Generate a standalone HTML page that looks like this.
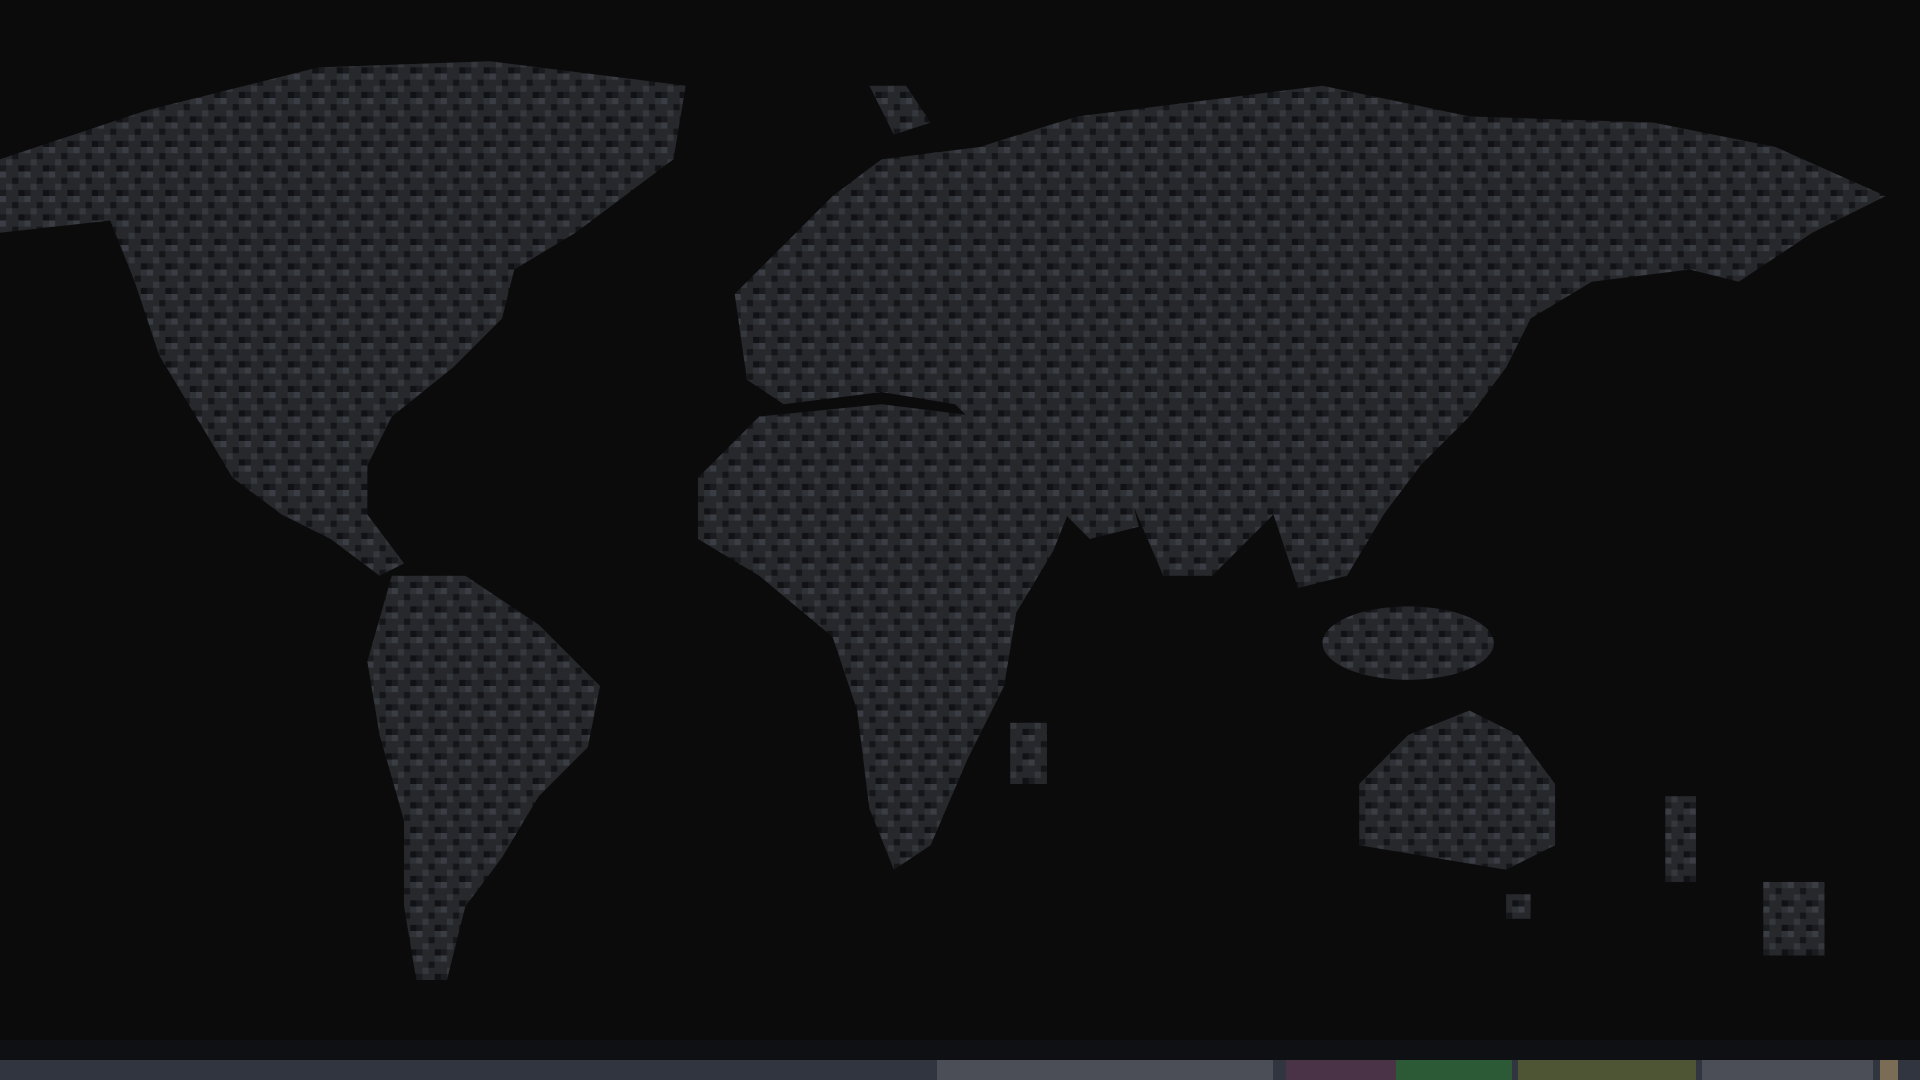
<!DOCTYPE html>
<html><head><meta charset="utf-8"><style>
html,body{margin:0;padding:0;width:1920px;height:1080px;overflow:hidden;background:#0b0b0c;font-family:"Liberation Mono",monospace}
svg{position:absolute;left:0;top:0}
.bar{position:absolute;left:0;top:1060px;width:1920px;height:20px;background:#313540}
.band{position:absolute;left:0;top:1040px;width:1920px;height:20px;background:#0f1013}
.seg{position:absolute;top:1060px;height:20px}
</style></head><body>
<svg width="1920" height="1040" viewBox="0 0 1568 849" preserveAspectRatio="none">
<defs>
<pattern id="p" width="20" height="20" patternUnits="userSpaceOnUse">
<rect width="20" height="20" fill="#26282c"/>
<rect x="0" y="0" width="5" height="5" fill="#3a3d43"/>
<rect x="10" y="5" width="5" height="5" fill="#15161a"/>
<rect x="5" y="10" width="5" height="5" fill="#34373c"/>
<rect x="15" y="15" width="5" height="5" fill="#111215"/>
<rect x="15" y="0" width="5" height="5" fill="#2f3237"/>
<rect x="0" y="15" width="5" height="5" fill="#1b1c20"/>
</pattern>
</defs>
<g fill="url(#p)">
<polygon points="0,130 120,90 260,55 400,50 560,70 550,130 470,190 420,220 410,260 370,300 320,340 300,380 300,420 330,460 310,470 270,440 230,420 190,390 160,340 130,290 110,230 90,180 0,190"/>
<polygon points="320,470 380,470 440,510 490,560 480,610 440,650 410,700 380,740 365,800 340,800 330,740 330,670 310,600 300,540"/>
<polygon points="600,240 640,200 680,160 720,130 800,120 880,95 1000,80 1080,70 1200,95 1350,100 1450,120 1540,160 1480,190 1420,230 1380,220 1300,230 1250,260 1230,300 1200,340 1160,380 1130,420 1100,470 1060,480 1040,420 990,470 950,470 920,400 880,380 840,350 780,330 720,320 640,330 610,310"/>
<polygon points="570,390 620,340 720,330 800,340 840,380 880,400 860,450 830,500 820,560 790,620 760,690 730,710 710,660 700,580 680,520 620,470 570,440"/>
<polygon points="780,330 850,330 920,390 930,430 890,440 850,400"/>
<polygon points="1110,640 1150,600 1200,580 1240,600 1270,640 1270,690 1230,710 1170,700 1110,690"/>
<ellipse cx="1150" cy="525" rx="70" ry="30"/>
<polygon points="710,70 740,70 760,100 730,110"/>
<rect x="825" y="590" width="30" height="50"/>
<rect x="1360" y="650" width="25" height="70"/>
<rect x="1440" y="720" width="50" height="60"/>
<rect x="1230" y="730" width="20" height="20"/>
</g>
</svg>
<div class="band"></div>
<div class="bar"></div>
<div class="seg" style="left:937px;width:336px;background:#4b4e57"></div>
<div class="seg" style="left:1286px;width:110px;background:#4a3346"></div>
<div class="seg" style="left:1396px;width:116px;background:#2c5a36"></div>
<div class="seg" style="left:1518px;width:178px;background:#4e5535"></div>
<div class="seg" style="left:1702px;width:171px;background:#4b4e57"></div>
<div class="seg" style="left:1880px;width:18px;background:#7a6c55"></div>
</body></html>
